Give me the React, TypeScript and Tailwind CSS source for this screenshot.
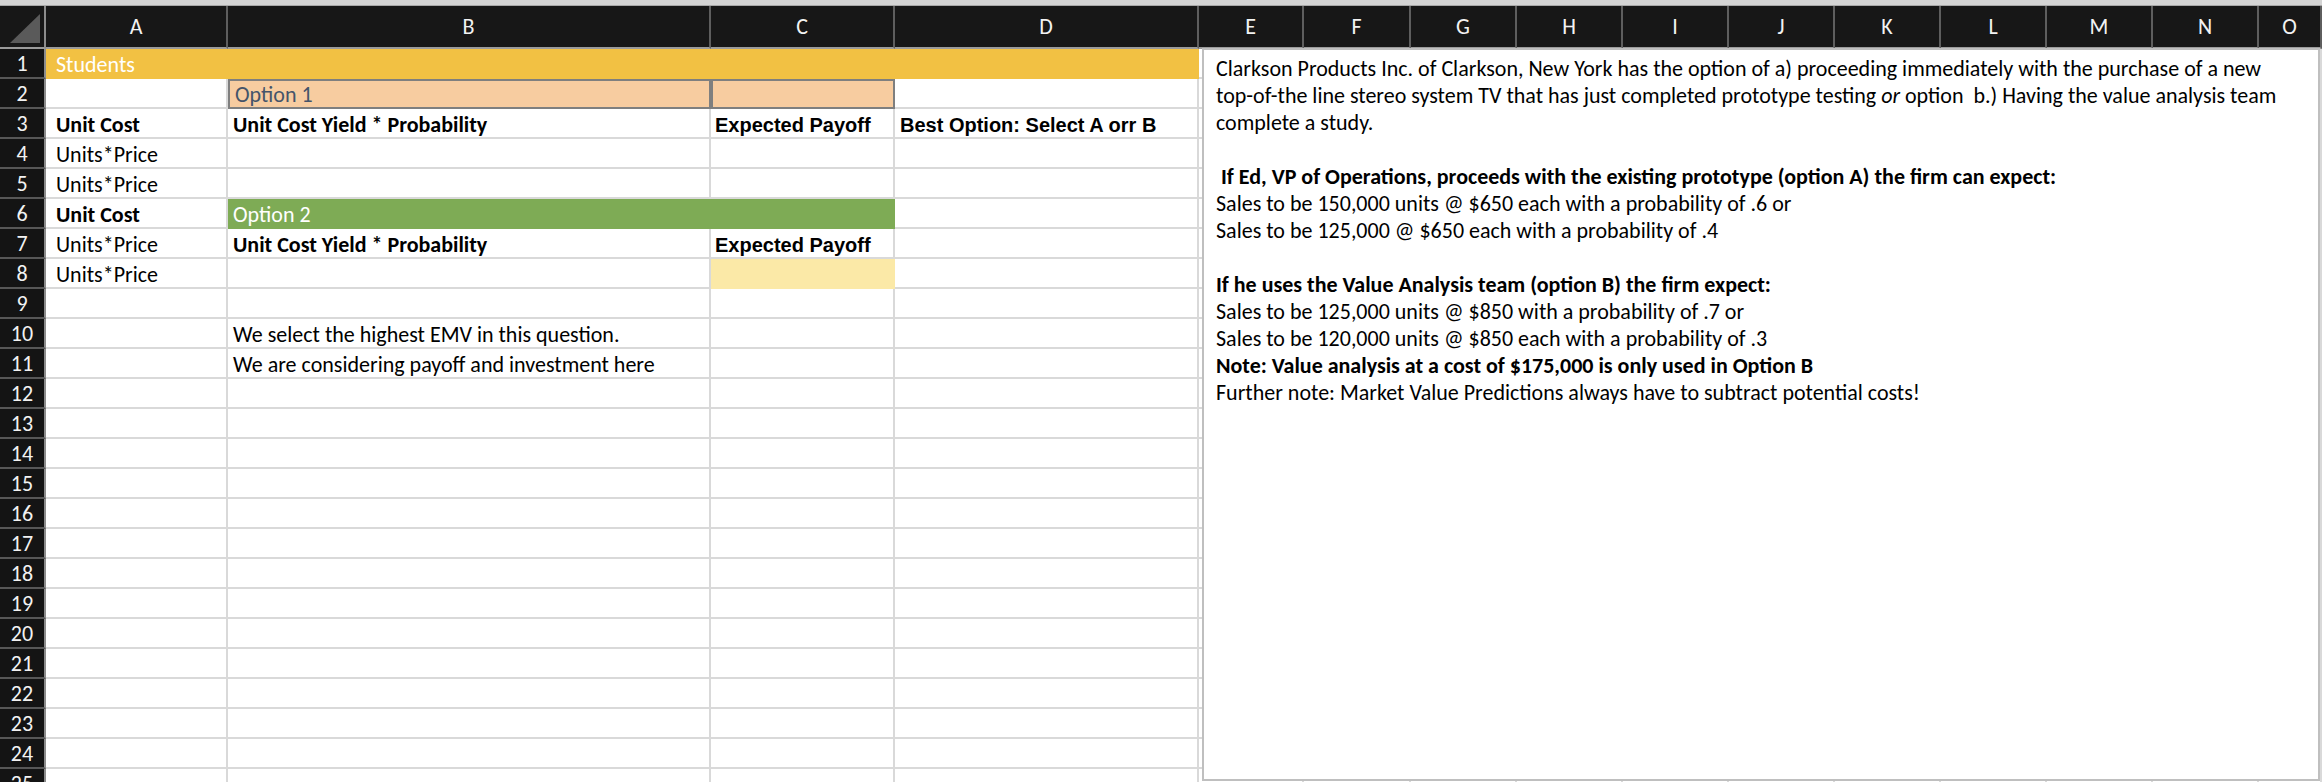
import React from 'react';

type Cell = { text?: string; cls?: string; font?: string };

const CAL = "font-['Carlito','Lato',sans-serif] text-[22px] leading-[24px]";
const CALB = "font-['Carlito','Lato',sans-serif] text-[22px] leading-[24px] font-bold";
const ARB = "font-['Liberation_Sans',Arial,sans-serif] text-[20px] leading-[24px] font-bold";

const grid = 'border-r-2 border-b-2 border-[#d9d9d9] bg-white';
const yellow = 'border-r-2 border-b-2 border-[#f2c143] bg-[#f2c143]';
const green = 'border-r-2 border-b-2 border-[#7eab55] bg-[#7eab55]';
const peach = 'border-2 border-[#7f7f7f] bg-[#f7cca0]';
const cream = 'border-r-2 border-b-2 border-[#fbe9a7] bg-[#fbe9a7]';

const COLS = ['A', 'B', 'C', 'D', 'E', 'F', 'G', 'H', 'I', 'J', 'K', 'L', 'M', 'N', 'O'];
const PAD: Record<string, string> = { A: 'pl-[10px]', B: 'pl-[5px]', C: 'pl-[4px]', D: 'pl-[5px]' };

const sheet: Record<number, Record<string, Cell>> = {
  1: {
    A: { text: 'Students', cls: yellow, font: `${CAL} text-white` },
    B: { cls: yellow },
    C: { cls: yellow },
    D: { cls: yellow },
  },
  2: {
    B: { text: 'Option 1', cls: peach, font: `${CAL} text-[#44546a]` },
    C: { cls: peach },
  },
  3: {
    A: { text: 'Unit Cost', font: CALB },
    B: { text: 'Unit Cost Yield * Probability', font: CALB },
    C: { text: 'Expected Payoff', font: ARB },
    D: { text: 'Best Option: Select A orr B', font: ARB },
  },
  4: { A: { text: 'Units*Price' } },
  5: { A: { text: 'Units*Price' } },
  6: {
    A: { text: 'Unit Cost', font: CALB },
    B: { text: 'Option 2', cls: green, font: `${CAL} text-white` },
    C: { cls: green },
  },
  7: {
    A: { text: 'Units*Price' },
    B: { text: 'Unit Cost Yield * Probability', font: CALB },
    C: { text: 'Expected Payoff', font: ARB },
  },
  8: { A: { text: 'Units*Price' }, C: { cls: cream } },
  10: { B: { text: 'We select the highest EMV in this question.' } },
  11: { B: { text: 'We are considering payoff and investment here' } },
};

// text box on the right, one entry per line
const noteLines: { t: string; bold?: boolean; em?: boolean }[] = [
  { t: 'Clarkson Products Inc. of Clarkson, New York has the option of a) proceeding immediately with the purchase of a new' },
  { t: 'top-of-the line stereo system TV that has just completed prototype testing ', em: true },
  { t: 'complete a study.' },
  { t: '' },
  { t: ' If Ed, VP of Operations, proceeds with the existing prototype (option A) the firm can expect:', bold: true },
  { t: 'Sales to be 150,000 units @ $650 each with a probability of .6 or' },
  { t: 'Sales to be 125,000 @ $650 each with a probability of .4' },
  { t: '' },
  { t: 'If he uses the Value Analysis team (option B) the firm expect:', bold: true },
  { t: 'Sales to be 125,000 units @ $850 with a probability of .7 or' },
  { t: 'Sales to be 120,000 units @ $850 each with a probability of .3' },
  { t: 'Note: Value analysis at a cost of $175,000 is only used in Option B', bold: true },
  { t: 'Further note: Market Value Predictions always have to subtract potential costs!' },
];

export default function App() {
  const rowNums = Array.from({ length: 25 }, (_, i) => i + 1);
  return (
    <div className="relative h-[782px] w-[2322px] overflow-hidden bg-white">
      <div className="h-[6px] bg-[#d4d4d4] border-b border-[#a8a8a8]" />
      <div className="grid grid-cols-[46px_182px_483px_184px_304px_105px_107px_repeat(8,106px)_minmax(0,1fr)] grid-rows-[43px_repeat(25,30px)]">
        {/* corner */}
        <div className="relative bg-[#171717] border-r-2 border-r-[#8c8c8c] border-b-2 border-b-[#9b9b9b]">
          <svg className="absolute left-0 top-0" width="44" height="41" viewBox="0 0 44 41">
            <polygon points="10,37 40,37 40,8" fill="#5a5a5a" />
          </svg>
        </div>
        {COLS.map(c => (
          <div
            key={c}
            className="flex items-center justify-center bg-[#171717] border-r-2 border-r-[#5e5e5e] border-b-2 border-b-[#9b9b9b] text-[#f2f2f2] font-['Carlito','Lato',sans-serif] text-[22px]"
          >
            {c}
          </div>
        ))}
        {rowNums.map(r => (
          <React.Fragment key={r}>
            <div className="flex items-center justify-center bg-[#141414] border-r-2 border-r-[#8c8c8c] border-b-2 border-b-[#575757] text-[#f2f2f2] font-['Carlito','Lato',sans-serif] text-[22px]">
              {r}
            </div>
            {COLS.map(c => {
              const cell = sheet[r]?.[c] ?? {};
              return (
                <div
                  key={c}
                  className={`flex items-end whitespace-nowrap text-black ${PAD[c] ?? ''} ${cell.cls ?? grid}`}
                >
                  {cell.text && <span className={cell.font ?? CAL}>{cell.text}</span>}
                </div>
              );
            })}
          </React.Fragment>
        ))}
      </div>

      {/* floating text box */}
      <div className="absolute left-[1202px] top-[48px] w-[1118px] h-[733px] border-2 border-[#bfbfbf] bg-white pl-[12px] pt-[5px] text-black font-['Carlito','Lato',sans-serif] text-[22px] leading-[27px]">
        {noteLines.map((l, i) => (
          <div key={i} className={`h-[27px] whitespace-pre ${l.bold ? 'font-bold' : ''}`}>
            {l.t}
            {l.em && (
              <>
                <i>or</i> option  b.) Having the value analysis team
              </>
            )}
          </div>
        ))}
      </div>
    </div>
  );
}
